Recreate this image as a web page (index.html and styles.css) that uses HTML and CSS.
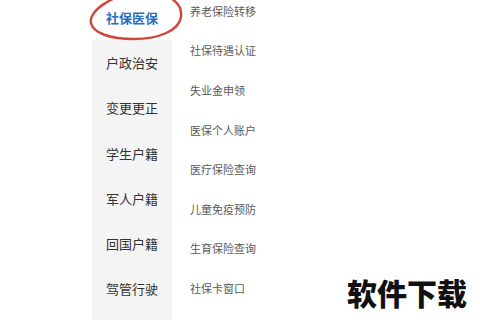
FILE: index.html
```html
<!DOCTYPE html>
<html lang="zh">
<head>
<meta charset="utf-8">
<link rel="stylesheet" href="styles.css">
</head>
<body>
<div class="page">
  <div class="gutter"></div>
  <ul class="sidebar">
    <li class="side-item active">社保医保</li>
    <li class="side-item">户政治安</li>
    <li class="side-item">变更更正</li>
    <li class="side-item">学生户籍</li>
    <li class="side-item">军人户籍</li>
    <li class="side-item">回国户籍</li>
    <li class="side-item">驾管行驶</li>
  </ul>
  <ul class="list">
    <li class="list-item">养老保险转移</li>
    <li class="list-item">社保待遇认证</li>
    <li class="list-item">失业金申领</li>
    <li class="list-item">医保个人账户</li>
    <li class="list-item">医疗保险查询</li>
    <li class="list-item">儿童免疫预防</li>
    <li class="list-item">生育保险查询</li>
    <li class="list-item">社保卡窗口</li>
  </ul>
</div>
<svg class="circle" width="110" height="50" viewBox="0 0 110 50">
  <path d="M7 22 C4 10 30 -8 58 -9 C84 -10 99 2 97 16 C95 30 74 38 50 38 C26 38 9 32 7 22 Z" fill="none" stroke="#cf463b" stroke-width="2.4"/>
</svg>
<div class="watermark">软件下载</div>
</body>
</html>
```

FILE: styles.css
```css
* { box-sizing: border-box; }
html, body {
  margin: 0;
  padding: 0;
  background: #fff;
  width: 480px;
  height: 320px;
  overflow: hidden;
  font-family: "Noto Sans CJK SC", "Noto Sans", sans-serif;
}
.page {
  display: flex;
  height: 320px;
}
.gutter {
  width: 92px;
  flex: none;
}
.sidebar {
  list-style: none;
  margin: -5.5px 0 0 0;
  padding: 0;
  width: 80px;
  flex: none;
  background: #f4f4f4;
  height: 330px;
}
.side-item {
  height: 45.3px;
  display: flex;
  align-items: center;
  justify-content: center;
  font-size: 13px;
  color: #333;
}
.side-item.active {
  background: #fff;
  color: #2c6dbf;
  font-weight: 700;
}
.list {
  list-style: none;
  margin: -9px 0 0 0;
  padding: 0 0 0 18px;
  flex: 1;
}
.list-item {
  height: 39.6px;
  display: flex;
  align-items: center;
  font-size: 11px;
  color: #5a5a5a;
}
.circle {
  position: absolute;
  left: 84px;
  top: 1px;
  overflow: visible;
}
.watermark {
  position: absolute;
  left: 347px;
  top: 275px;
  font-size: 30px;
  line-height: 34px;
  font-weight: 900;
  color: #111;
}
```
